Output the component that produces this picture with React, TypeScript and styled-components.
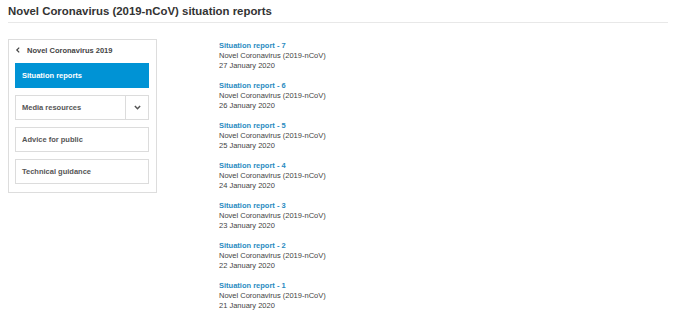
import React from "react";
import styled, { createGlobalStyle } from "styled-components";

const GlobalStyle = createGlobalStyle`
  html, body {
    margin: 0;
    padding: 0;
    background: #ffffff;
  }
  body {
    font-family: "Liberation Sans", Arial, sans-serif;
  }
`;

const Page = styled.div`
  width: 680px;
  height: 316px;
  padding: 0 12px 0 8px;
  box-sizing: border-box;
  overflow: hidden;
`;

const Header = styled.h1`
  margin: 0;
  padding: 5px 0 4px;
  font-size: 11.4px;
  line-height: 13px;
  font-weight: bold;
  color: #333333;
  border-bottom: 1px solid #e8e8e8;
`;

const Body = styled.div`
  display: flex;
  align-items: flex-start;
  margin-top: 16px;
`;

const Sidebar = styled.nav`
  width: 149px;
  box-sizing: border-box;
  border: 1px solid #dddddd;
  padding: 4px 7px 8px 6px;
  display: flex;
  flex-direction: column;
  gap: 7px;
`;

const BackLink = styled.div`
  display: flex;
  align-items: center;
  gap: 6px;
  height: 12px;
  font-size: 7.5px;
  font-weight: bold;
  color: #444444;
`;

const NavItem = styled.div<{ $active?: boolean }>`
  height: 25px;
  box-sizing: border-box;
  display: flex;
  align-items: stretch;
  border: 1px solid ${(p) => (p.$active ? "#0093d5" : "#dcdcdc")};
  background: ${(p) => (p.$active ? "#0093d5" : "#ffffff")};
  color: ${(p) => (p.$active ? "#ffffff" : "#555555")};
  font-size: 7.5px;
  font-weight: bold;
`;

const NavLabel = styled.span`
  flex: 1;
  display: flex;
  align-items: center;
  padding-left: 6px;
`;

const Toggle = styled.span`
  width: 22px;
  border-left: 1px solid #dcdcdc;
  display: flex;
  align-items: center;
  justify-content: center;
`;

const ReportList = styled.div`
  margin-left: 62px;
  margin-top: 2px;
  display: flex;
  flex-direction: column;
  gap: 10px;
`;

const Report = styled.div`
  display: flex;
  flex-direction: column;
  font-size: 7.5px;
  line-height: 10px;
  color: #444444;
`;

const ReportTitle = styled.a`
  color: #2a8bbf;
  font-weight: bold;
  text-decoration: none;
`;

const reports = [7, 6, 5, 4, 3, 2, 1].map((n) => ({
  n,
  date: `${20 + n} January 2020`,
}));

const ChevronLeft = () => (
  <svg width="6" height="6" viewBox="0 0 10 10">
    <path d="M7 1 L3 5 L7 9" fill="none" stroke="#444" strokeWidth="2" />
  </svg>
);

const ChevronDown = () => (
  <svg width="7" height="5" viewBox="0 0 12 8">
    <path d="M1.5 1.5 L6 6 L10.5 1.5" fill="none" stroke="#555" strokeWidth="2.6" />
  </svg>
);

const App: React.FC = () => {
  return (
    <Page>
      <GlobalStyle />
      <Header>Novel Coronavirus (2019-nCoV) situation reports</Header>
      <Body>
        <Sidebar>
          <BackLink>
            <ChevronLeft />
            Novel Coronavirus 2019
          </BackLink>
          <NavItem $active>
            <NavLabel>Situation reports</NavLabel>
          </NavItem>
          <NavItem>
            <NavLabel>Media resources</NavLabel>
            <Toggle>
              <ChevronDown />
            </Toggle>
          </NavItem>
          <NavItem>
            <NavLabel>Advice for public</NavLabel>
          </NavItem>
          <NavItem>
            <NavLabel>Technical guidance</NavLabel>
          </NavItem>
        </Sidebar>
        <ReportList>
          {reports.map((r) => (
            <Report key={r.n}>
              <ReportTitle href="#">Situation report - {r.n}</ReportTitle>
              <span>Novel Coronavirus (2019-nCoV)</span>
              <span>{r.date}</span>
            </Report>
          ))}
        </ReportList>
      </Body>
    </Page>
  );
};

export default App;
